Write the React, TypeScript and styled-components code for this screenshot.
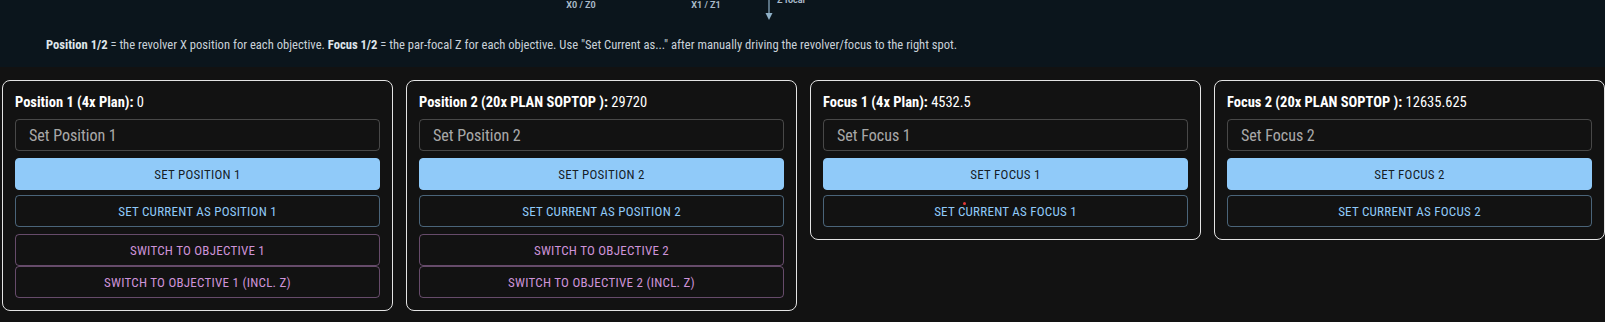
import React from "react";
import styled, { createGlobalStyle } from "styled-components";

const GlobalStyle = createGlobalStyle`
  html, body {
    margin: 0;
    padding: 0;
    background: #121212;
    overflow: hidden;
  }
  body {
    font-family: "Roboto Condensed", Roboto, "Liberation Sans", sans-serif;
    color: #ffffff;
  }
  * { box-sizing: border-box; }
`;

const Page = styled.div`
  width: 1605px;
  height: 322px;
  background: #121212;
`;

const InfoPanel = styled.section`
  height: 67px;
  background: #0b151c;
  display: flex;
  flex-direction: column;
`;

const Diagram = styled.svg`
  display: block;
  width: 1605px;
  height: 26px;
  flex: none;
`;

const Note = styled.p`
  margin: 12px 0 0 46px;
  font-size: 12.6px;
  line-height: 14px;
  color: #c9d1d9;
  white-space: nowrap;
  b { font-weight: 700; color: #dfe5ea; }
`;

const CardGrid = styled.div`
  display: grid;
  grid-template-columns: repeat(4, 391px);
  column-gap: 13px;
  align-items: start;
  padding: 13px 0 0 2px;
`;

const Card = styled.div`
  border: 1px solid #e4e4e4;
  border-radius: 8px;
  padding: 12px;
  display: flex;
  flex-direction: column;
  background: #121212;
`;

const Title = styled.div`
  font-size: 14.5px;
  line-height: 20px;
  color: #ffffff;
  white-space: nowrap;
  b { font-weight: 700; }
`;

const Field = styled.input`
  margin-top: 6px;
  height: 32px;
  width: 100%;
  background: transparent;
  border: 1px solid rgba(255, 255, 255, 0.23);
  border-radius: 4px;
  padding: 0 13px;
  font-family: inherit;
  font-size: 16px;
  color: #fff;
  outline: none;
  &::placeholder { color: rgba(255, 255, 255, 0.65); }
`;

type Tone = "primary" | "outlined" | "secondary";

const Button = styled.button<{ $tone: Tone; $gap: number }>`
  position: relative;
  margin-top: ${(p) => p.$gap}px;
  height: 32px;
  width: 100%;
  border-radius: 4px;
  font-family: inherit;
  font-size: 13px;
  font-weight: 400;
  letter-spacing: 0.25px;
  text-transform: uppercase;
  cursor: pointer;
  background: ${(p) => (p.$tone === "primary" ? "#90caf9" : "transparent")};
  color: ${(p) =>
    p.$tone === "primary" ? "rgba(0,0,0,0.87)" : p.$tone === "outlined" ? "#90caf9" : "#ce93d8"};
  border: 1px solid
    ${(p) =>
      p.$tone === "primary"
        ? "#90caf9"
        : p.$tone === "outlined"
        ? "rgba(144, 202, 249, 0.45)"
        : "rgba(206, 147, 216, 0.45)"};
`;

const Dot = styled.span`
  position: absolute;
  left: 139px;
  top: 6px;
  width: 3px;
  height: 3px;
  border-radius: 50%;
  background: #e53935;
`;

type CardData = {
  label: string;
  value: string;
  placeholder: string;
  set: string;
  current: string;
  switches: string[];
  dot?: boolean;
};

const cards: CardData[] = [
  {
    label: "Position 1 (4x Plan):",
    value: "0",
    placeholder: "Set Position 1",
    set: "Set Position 1",
    current: "Set Current as Position 1",
    switches: ["Switch to Objective 1", "Switch to Objective 1 (incl. Z)"],
  },
  {
    label: "Position 2 (20x PLAN SOPTOP ):",
    value: "29720",
    placeholder: "Set Position 2",
    set: "Set Position 2",
    current: "Set Current as Position 2",
    switches: ["Switch to Objective 2", "Switch to Objective 2 (incl. Z)"],
  },
  {
    label: "Focus 1 (4x Plan):",
    value: "4532.5",
    placeholder: "Set Focus 1",
    set: "Set Focus 1",
    current: "Set Current as Focus 1",
    switches: [],
    dot: true,
  },
  {
    label: "Focus 2 (20x PLAN SOPTOP ):",
    value: "12635.625",
    placeholder: "Set Focus 2",
    set: "Set Focus 2",
    current: "Set Current as Focus 2",
    switches: [],
  },
];

export default function App() {
  return (
    <Page>
      <GlobalStyle />
      <InfoPanel>
        <Diagram viewBox="0 0 1605 26">
          <g fontFamily="Roboto, sans-serif" fontSize="9" fontWeight="700" fill="#a9b9c8">
            <text x="581" y="8" textAnchor="middle">X0 / Z0</text>
            <text x="706" y="8" textAnchor="middle">X1 / Z1</text>
            <text x="777" y="3">Z focal</text>
          </g>
          <line x1="769" y1="0" x2="769" y2="15" stroke="#8fb0c6" strokeWidth="1.2" />
          <polygon points="765.5,13 772.5,13 769,20" fill="#8fb0c6" />
        </Diagram>
        <Note>
          <b>Position 1/2</b> = the revolver X position for each objective. <b>Focus 1/2</b> = the
          par-focal Z for each objective. Use "Set Current as..." after manually driving the
          revolver/focus to the right spot.
        </Note>
      </InfoPanel>
      <CardGrid>
        {cards.map((c) => (
          <Card key={c.label}>
            <Title>
              <b>{c.label}</b> {c.value}
            </Title>
            <Field placeholder={c.placeholder} />
            <Button $tone="primary" $gap={7}>{c.set}</Button>
            <Button $tone="outlined" $gap={5}>
              {c.dot && <Dot />}
              {c.current}
            </Button>
            {c.switches.map((s, i) => (
              <Button key={s} $tone="secondary" $gap={i === 0 ? 7 : 0}>
                {s}
              </Button>
            ))}
          </Card>
        ))}
      </CardGrid>
    </Page>
  );
}
